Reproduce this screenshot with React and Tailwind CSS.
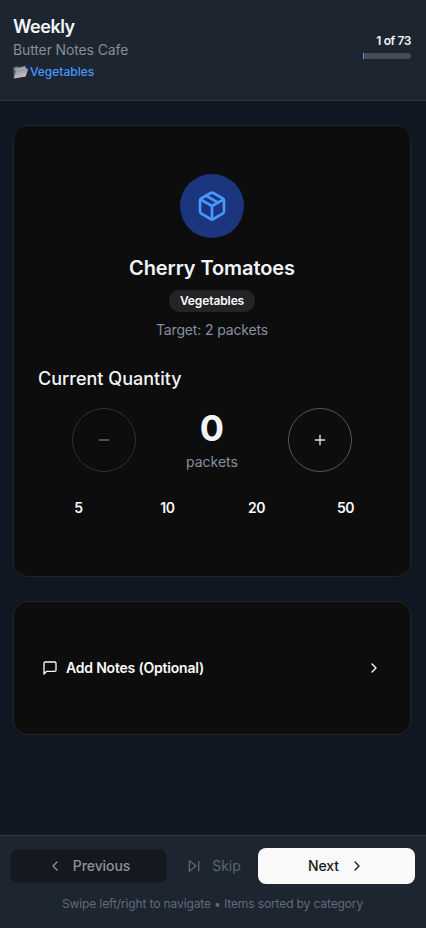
import React, { useState } from 'react';
import { Package, Minus, Plus, ChevronLeft, ChevronRight } from 'lucide-react';

const QUICK_AMOUNTS = [5, 10, 20, 50];

const item = {
  name: 'Cherry Tomatoes',
  category: 'Vegetables',
  target: 2,
  unit: 'packets',
};

function FolderIcon() {
  return (
    <svg width="16" height="14" viewBox="0 0 16 14" className="shrink-0">
      <defs>
        <linearGradient id="folderFront" x1="0" y1="0" x2="0.4" y2="1">
          <stop offset="0" stopColor="#808890" />
          <stop offset="1" stopColor="#c5c8cb" />
        </linearGradient>
      </defs>
      <path d="M0.3 2.2 L4.8 1.3 L6 2.2 L12.4 0.5 L13 4 L2.5 6 L0.8 12.8 Z" fill="#667078" />
      <path d="M2 3.8 L12.7 1.8 V4 L2.2 5.5 Z" fill="#a8adb1" />
      <path d="M3 5 L15.3 3.4 L12.7 11.6 L0.7 13.5 Z" fill="url(#folderFront)" />
    </svg>
  );
}

function LineIcon({ children }) {
  return (
    <svg
      width="16"
      height="16"
      viewBox="0 0 24 24"
      fill="none"
      stroke="currentColor"
      strokeWidth="2"
      strokeLinecap="round"
      strokeLinejoin="round"
      className="shrink-0"
    >
      {children}
    </svg>
  );
}

export default function App() {
  const [quantity, setQuantity] = useState(0);
  const current = 1;
  const total = 73;

  return (
    <div className="flex h-[928px] w-full flex-col bg-[#111722] font-['Inter','Noto_Sans',sans-serif] text-white">
      {/* Header */}
      <header className="flex h-[101px] shrink-0 justify-between border-b border-[#2d3743] bg-[#1c2530] pr-[15px] pl-[13px]">
        <div className="pt-[13px]">
          <h1 className="text-[18px] leading-7 font-semibold tracking-[-0.45px] text-[#f5f6f8]">Weekly</h1>
          <p className="mt-[-1px] text-sm leading-5 tracking-[-0.13px] text-[#858d97]">Butter Notes Cafe</p>
          <p className="mt-1 flex items-center gap-[1px] text-xs leading-4 font-medium tracking-[-0.02px] text-[#4798ff]">
            <FolderIcon />
            {item.category}
          </p>
        </div>
        <div className="flex flex-col items-end pt-[33px]">
          <span className="text-xs leading-4 font-semibold tracking-[-0.4px] text-[#f3f4f6]">
            {current} of {total}
          </span>
          <div className="mt-1 h-1.5 w-12 overflow-hidden rounded-r-full bg-[#434d5a]">
            <div className="h-full bg-[#4798ff]" style={{ width: `${(current / total) * 100}%` }} />
          </div>
        </div>
      </header>

      {/* Item */}
      <main className="flex grow flex-col gap-6 pt-6 pr-[15px] pl-[13px]">
        <section className="flex h-[452px] flex-col rounded-[14px] border border-[#232323] bg-[#0d0d0d] px-6 pt-12">
          <div className="flex flex-col items-center">
            <div className="flex size-16 items-center justify-center rounded-full bg-[#1b367f] text-[#4798ff]">
              <Package size={32} />
            </div>
            <h2 className="mt-4 text-xl leading-7 font-semibold tracking-[-0.08px] text-[#f3f4f8]">{item.name}</h2>
            <span className="mt-2 flex h-[22px] w-[86px] items-center justify-center rounded-full bg-[#242426] text-xs font-semibold tracking-[-0.1px] text-[#fafafa]">
              {item.category}
            </span>
            <p className="mt-2 text-sm leading-5 tracking-[-0.15px] text-[#858f9f]">
              Target: {item.target} {item.unit}
            </p>
          </div>

          <h3 className="mt-[25px] text-lg leading-7 font-medium tracking-[0.02px] text-[#f3f4f8]">Current Quantity</h3>
          <div className="mt-[15px] flex h-16 items-center justify-between px-[34px]">
            <button
              className="flex size-16 items-center justify-center rounded-full border border-[#4b5868] opacity-50"
              disabled={quantity === 0}
              onClick={() => setQuantity(quantity - 1)}
            >
              <Minus size={16} className="text-[#c8c8c8]" />
            </button>
            <div className="flex flex-col items-center">
              <span className="text-4xl leading-10 font-bold text-[#f3f4f8]">{quantity}</span>
              <span className="mt-1 text-sm leading-5 tracking-[-0.02px] text-[#858f9f]">{item.unit}</span>
            </div>
            <button
              className="flex size-16 items-center justify-center rounded-full border border-[#4b5868]"
              onClick={() => setQuantity(quantity + 1)}
            >
              <Plus size={16} className="text-[#e4e4e4]" />
            </button>
          </div>

          <div className="mt-5 grid grid-cols-4 gap-2">
            {QUICK_AMOUNTS.map((amount) => (
              <button
                key={amount}
                className="h-8 text-sm font-semibold tracking-[-0.4px] text-[#fafafa]"
                onClick={() => setQuantity(amount)}
              >
                {amount}
              </button>
            ))}
          </div>
        </section>

        <section className="flex h-[134px] items-center rounded-[14px] border border-[#232323] bg-[#0d0d0d] px-7">
          <button className="flex w-full items-center text-[#fafafa]">
            <LineIcon>
              <path d="M21 15a2 2 0 0 1-2 2H7l-4 4V5a2 2 0 0 1 2-2h14a2 2 0 0 1 2 2z" />
            </LineIcon>
            <span className="ml-2 text-sm leading-5 font-semibold tracking-[-0.2px]">Add Notes (Optional)</span>
            <ChevronRight size={16} className="ml-auto" />
          </button>
        </section>
      </main>

      {/* Navigation */}
      <footer className="h-[93px] shrink-0 border-t border-[#343b49] bg-[#1c2530] pt-3 pr-[11px] pl-[10px]">
        <div className="flex h-9 items-center">
          <button className="flex h-[34px] w-[157px] items-center justify-center rounded-lg border border-[#191e23] bg-[#14191f] text-[#8f9194]">
            <ChevronLeft size={16} />
            <span className="ml-2.5 text-sm font-medium tracking-[-0.1px]">Previous</span>
          </button>
          <button className="flex w-[91px] items-center justify-center gap-2.5 pl-0.5 text-sm text-[#5d6673]">
            <LineIcon>
              <polygon points="5 4 15 12 5 20 5 4" />
              <line x1="19" x2="19" y1="5" y2="19" />
            </LineIcon>
            <span className="tracking-[-0.05px]">Skip</span>
          </button>
          <button className="flex h-9 w-[157px] items-center justify-center rounded-lg bg-[#fafafa] text-[#18181b]">
            <span className="mr-2.5 text-sm font-medium tracking-[-0.1px]">Next</span>
            <ChevronRight size={16} />
          </button>
        </div>
        <p className="mt-3 text-center text-xs leading-4 tracking-[-0.12px] text-[#626b78]">
          Swipe left/right to navigate • Items sorted by category
        </p>
      </footer>
    </div>
  );
}
